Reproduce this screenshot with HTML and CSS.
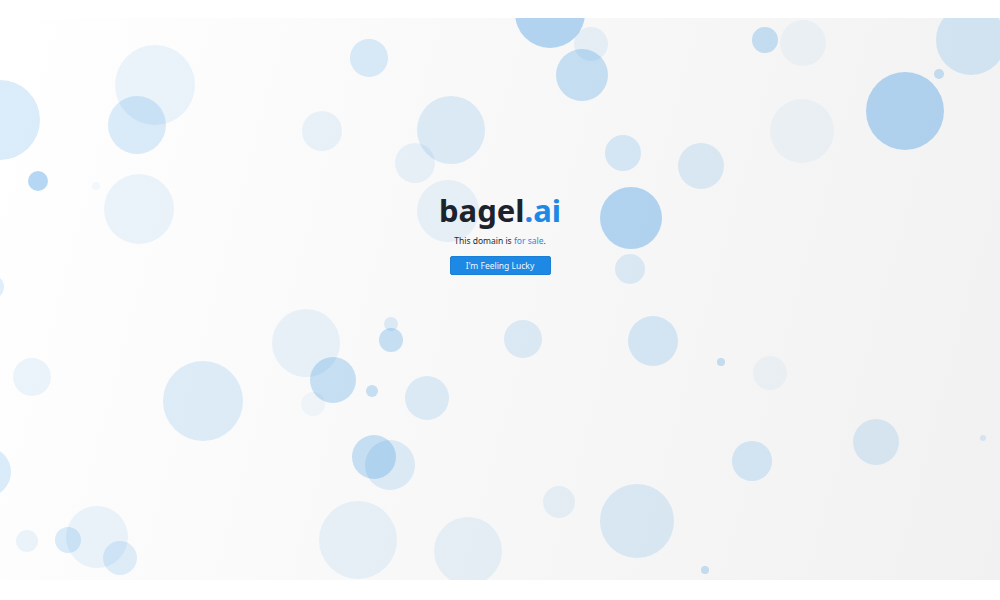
FILE: index.html
```html
<!DOCTYPE html>
<html lang="en">
<head>
<meta charset="utf-8">
<title>bagel.ai</title>
<link rel="stylesheet" href="styles.css">
</head>
<body>
<main class="stage">
  <svg class="bubbles" viewBox="0 18 1000 562" preserveAspectRatio="none" aria-hidden="true">
    <g class="b1">
      <circle cx="550" cy="13" r="35"/>
      <circle cx="631" cy="218" r="31"/>
      <circle cx="905" cy="111" r="39"/>
      <circle cx="38" cy="181" r="10"/>
    </g>
    <g class="b2">
      <circle cx="582" cy="75" r="26"/>
      <circle cx="765" cy="40" r="13"/>
      <circle cx="939" cy="74" r="5"/>
      <circle cx="391" cy="340" r="12"/>
      <circle cx="372" cy="391" r="6"/>
      <circle cx="333" cy="380" r="23"/>
      <circle cx="374" cy="457" r="22"/>
      <circle cx="721" cy="362" r="4"/>
      <circle cx="705" cy="570" r="4"/>
    </g>
    <g class="b3">
      <circle cx="369" cy="58" r="19"/>
      <circle cx="0" cy="120" r="40"/>
      <circle cx="137" cy="125" r="29"/>
      <circle cx="971" cy="40" r="35"/>
      <circle cx="623" cy="153" r="18"/>
      <circle cx="653" cy="341" r="25"/>
      <circle cx="752" cy="461" r="20"/>
      <circle cx="-14" cy="472" r="25"/>
      <circle cx="68" cy="540" r="13"/>
    </g>
    <g class="b4">
      <circle cx="451" cy="130" r="34"/>
      <circle cx="701" cy="166" r="23"/>
      <circle cx="630" cy="269" r="15"/>
      <circle cx="203" cy="401" r="40"/>
      <circle cx="391" cy="324" r="7"/>
      <circle cx="427" cy="398" r="22"/>
      <circle cx="523" cy="339" r="19"/>
      <circle cx="390" cy="465" r="25"/>
      <circle cx="876" cy="442" r="23"/>
      <circle cx="983" cy="438" r="3"/>
      <circle cx="637" cy="521" r="37"/>
      <circle cx="120" cy="558" r="17"/>
      <circle cx="-8" cy="287" r="12"/>
    </g>
    <g class="b5">
      <circle cx="155" cy="85" r="40"/>
      <circle cx="139" cy="209" r="35"/>
      <circle cx="322" cy="131" r="20"/>
      <circle cx="591" cy="44" r="17"/>
      <circle cx="448" cy="211" r="31"/>
      <circle cx="415" cy="163" r="20"/>
      <circle cx="32" cy="377" r="19"/>
      <circle cx="306" cy="343" r="34"/>
      <circle cx="97" cy="537" r="31"/>
      <circle cx="27" cy="541" r="11"/>
      <circle cx="559" cy="502" r="16"/>
      <circle cx="358" cy="540" r="39"/>
      <circle cx="468" cy="551" r="34"/>
    </g>
    <g class="b6">
      <circle cx="803" cy="43" r="23"/>
      <circle cx="802" cy="131" r="32"/>
      <circle cx="770" cy="373" r="17"/>
      <circle cx="313" cy="404" r="12"/>
      <circle cx="96" cy="186" r="4"/>
    </g>
  </svg>
  <section class="pitch">
    <h1 class="name">bagel<span class="tld">.ai</span></h1>
    <p class="note">This domain is <a class="sale" href="#">for sale</a>.</p>
    <button class="lucky" type="button">I'm Feeling Lucky</button>
  </section>
</main>
</body>
</html>
```

FILE: styles.css
```css
html, body {
  margin: 0;
  padding: 0;
  background: #ffffff;
}

body {
  padding: 18px 0 20px;
  font-family: "Noto Sans", "Open Sans", "DejaVu Sans", sans-serif;
}

.stage {
  position: relative;
  height: 562px;
  overflow: hidden;
  background: linear-gradient(105deg, #ffffff 0%, #f9f9f9 40%, #f1f1f1 100%);
  display: flex;
  flex-direction: column;
  align-items: center;
}

.bubbles {
  position: absolute;
  inset: 0;
  width: 100%;
  height: 100%;
}

.bubbles circle { fill: #2a8ee0; }
.b1 circle { fill-opacity: 0.34; }
.b2 circle { fill-opacity: 0.25; }
.b3 circle { fill-opacity: 0.17; }
.b4 circle { fill-opacity: 0.14; }
.b5 circle { fill-opacity: 0.09; }
.b6 circle { fill-opacity: 0.05; }

.pitch {
  position: relative;
  padding-top: 173px;
  display: flex;
  flex-direction: column;
  align-items: center;
}

.name {
  margin: 0;
  font-size: 31px;
  line-height: 38px;
  font-weight: 700;
  color: #1d232b;
  letter-spacing: 0;
}

.tld { color: #1e88e5; }

.note {
  margin: 6px 0 0;
  font-size: 8.5px;
  line-height: 12px;
  color: #262a2e;
}

.sale {
  color: #1e88e5;
  text-decoration: none;
}

.lucky {
  margin-top: 9px;
  width: 101px;
  height: 19px;
  padding: 0;
  border: 1px solid #1a7fd6;
  border-radius: 2px;
  background: #1e88e5;
  color: #f2f8fe;
  font-family: inherit;
  font-size: 8.5px;
  line-height: 17px;
}
```
